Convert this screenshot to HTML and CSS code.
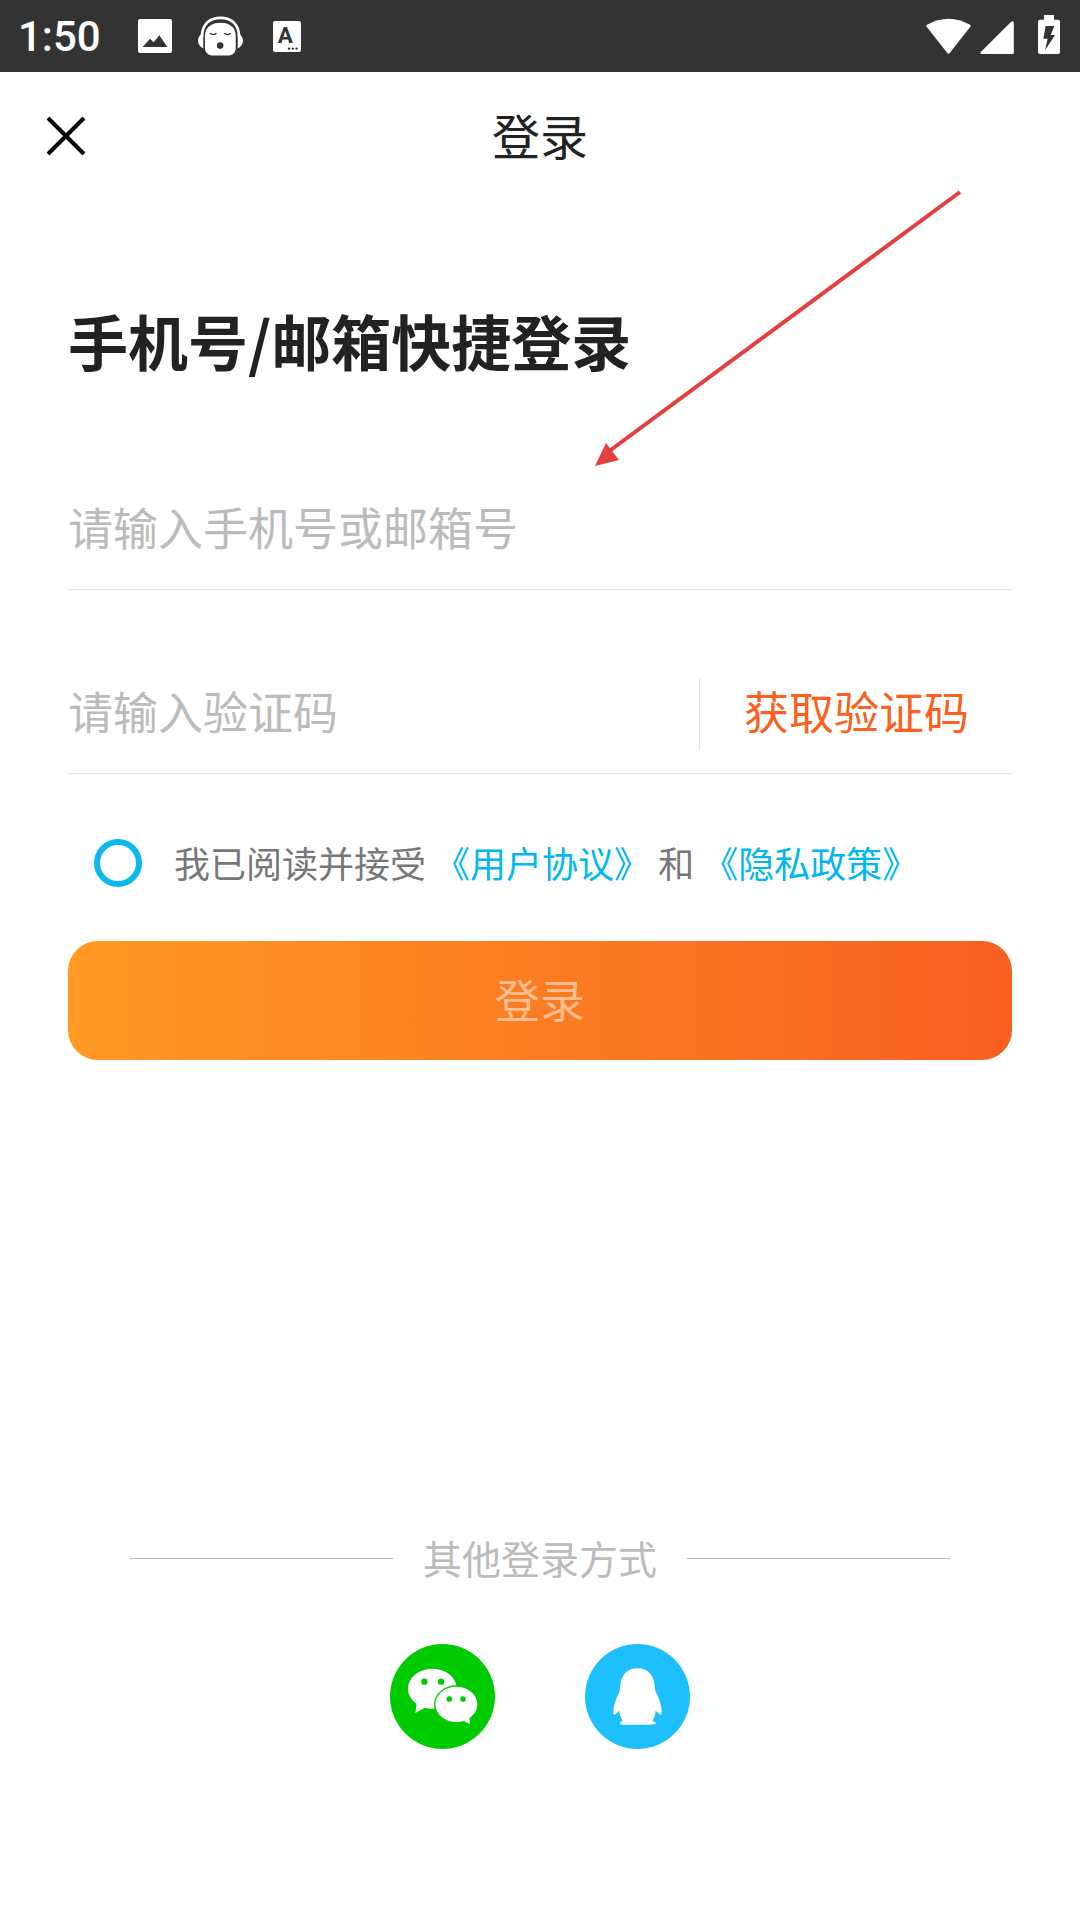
FILE: index.html
```html
<!DOCTYPE html>
<html lang="zh-CN">
<head>
  <meta charset="UTF-8">
  <meta name="viewport" content="width=device-width, initial-scale=1.0">
  <title>登录</title>
  <link rel="stylesheet" href="styles.css">
</head>
<body>
  <div class="status-bar">
    <span class="time">1:50</span>
    <svg class="st-image" viewBox="0 0 102 102"><rect width="102" height="102" rx="6" fill="#fff"/><path d="M14 84 L36 59 L47 70 L64 49 L88 84Z" fill="#333"/></svg>
    <svg class="st-face" viewBox="0 0 136 120">
      <path d="M12 62 C12 24 36 5 68 5 C100 5 124 24 124 62" fill="none" stroke="#fff" stroke-width="8"/>
      <path d="M16 50 L16 98 C6 92 0 84 0 74 C0 64 6 56 16 50Z M120 50 L120 98 C130 92 136 84 136 74 C136 64 130 56 120 50Z" fill="#fff"/>
      <path d="M21 60 C21 34 40 20 68 20 C96 20 114 34 114 60 L114 96 C114 110 104 119 90 119 L46 119 C32 119 21 110 21 96Z" fill="#fff"/>
      <path d="M36 52 Q46 60 56 52 M79 52 Q89 60 99 52" fill="none" stroke="#333" stroke-width="4"/>
      <circle cx="67" cy="89" r="10" fill="#333"/>
    </svg>
    <svg class="st-a" viewBox="0 0 82 91"><rect width="82" height="91" rx="6" fill="#fff"/><text x="36" y="66" font-family="Roboto, sans-serif" font-size="66" font-weight="700" text-anchor="middle" fill="#333">A</text><circle cx="47" cy="81" r="3.5" fill="#333"/><circle cx="58" cy="81" r="3.5" fill="#333"/><circle cx="69" cy="81" r="3.5" fill="#333"/></svg>
    <svg class="st-wifi" viewBox="0 0 134 110"><path d="M3 20 Q67 -16 131 20 Q134 23 132 26 L70 105 Q67 108 64 105 L2 26 Q0 23 3 20Z" fill="#fff"/></svg>
    <svg class="st-signal" viewBox="0 0 102 100"><path d="M2 94 L94 2 Q102 -2 102 6 L102 96 Q102 100 98 100 L5 100 Q-2 100 2 94Z" fill="#fff"/></svg>
    <svg class="st-battery" viewBox="0 0 66 117"><path d="M18 0 H48 V14 H60 Q66 14 66 20 V111 Q66 117 60 117 H6 Q0 117 0 111 V20 Q0 14 6 14 H18Z" fill="#fff"/><path d="M23 33 H49 L38 60 H51 L21 106 L29 71 H16Z" fill="#333"/></svg>
  </div>

  <div class="header">
    <svg class="close" viewBox="0 0 40 40"><path d="M2 2 L38 38 M38 2 L2 38" stroke="#000" stroke-width="4" fill="none"/></svg>
    <div class="header-title">登录</div>
  </div>

  <div class="login">
    <h1>手机号/邮箱快捷登录</h1>

    <div class="field field-phone">
      <span class="placeholder">请输入手机号或邮箱号</span>
    </div>

    <div class="field field-code">
      <span class="placeholder">请输入验证码</span>
      <span class="get-code">获取验证码</span>
    </div>

    <div class="agree">
      <span class="radio"></span>
      <span class="agree-text">我已阅读并接受 <a>《用户协议》</a> 和 <a>《隐私政策》</a></span>
    </div>

    <div class="login-btn">登录</div>

    <div class="other">
      <span class="other-line"></span>
      <span class="other-text">其他登录方式</span>
      <span class="other-line"></span>
    </div>

    <div class="socials">
      <svg class="social" viewBox="0 0 315 315">
        <circle cx="157.5" cy="157.5" r="157.5" fill="#00cb00"/>
        <path d="M76 207 L80 178 L110 188Z" fill="#fff"/>
        <ellipse cx="127" cy="134" rx="73" ry="60" fill="#fff"/>
        <circle cx="103" cy="113" r="9.5" fill="#00cb00"/>
        <circle cx="153" cy="113" r="9.5" fill="#00cb00"/>
        <ellipse cx="199" cy="181" rx="67" ry="57" fill="#00cb00"/>
        <path d="M240 241 L238 220 L213 226Z" fill="#fff"/>
        <ellipse cx="199" cy="181" rx="63" ry="53" fill="#fff"/>
        <circle cx="178" cy="165" r="8.5" fill="#00cb00"/>
        <circle cx="219" cy="165" r="8.5" fill="#00cb00"/>
      </svg>
      <svg class="social" viewBox="0 0 315 315">
        <circle cx="157.5" cy="157.5" r="157.5" fill="#1dc0fd"/>
        <path d="M157 73 C125 73 108 95 106 125 C105 135 104 140 103 145 C95 160 85 185 85 205 C85 212 88 214 91 211 L103 200 C104 212 106 220 113 230 C107 233 104 236 105 239 C106 242 115 242 125 242 L190 242 C205 242 214 241 213 238 C212 236 208 233 202 230 C209 220 211 212 212 200 L224 211 C227 214 230 212 230 205 C230 185 222 160 212 145 C211 140 210 135 209 125 C207 95 189 73 157 73Z" fill="#fff"/>
      </svg>
    </div>
  </div>

  <svg class="arrow" viewBox="0 0 1080 1920">
    <path d="M960 192 L608 452" stroke="#e53e3e" stroke-width="4" fill="none"/>
    <path d="M595 466 L606 443 L619 460Z" fill="#e53e3e"/>
  </svg>
</body>
</html>
```

FILE: styles.css
```css
body {
  margin: 0;
  width: 1080px;
  height: 1920px;
  overflow: hidden;
  background: #fff;
  font-family: "Noto Sans CJK SC", "Noto Sans", sans-serif;
  position: relative;
}

.status-bar {
  height: 72px;
  background: #333;
  display: flex;
  align-items: center;
  padding-right: 20px;
}

.time {
  width: 138px;
  padding-left: 18px;
  box-sizing: border-box;
  color: #fff;
  font-family: Roboto, sans-serif;
  font-size: 42px;
  font-weight: 500;
}

.st-image {
  width: 34px;
  height: 34px;
}

.st-face {
  width: 45px;
  height: 40px;
  margin-left: 26px;
}

.st-a {
  width: 28px;
  height: 31px;
  margin-left: 30px;
}

.st-wifi {
  width: 45px;
  height: 37px;
  margin-left: auto;
}

.st-signal {
  width: 34px;
  height: 33px;
  margin-left: 9px;
  margin-top: 2px;
}

.st-battery {
  width: 22px;
  height: 39px;
  margin-left: 24px;
  margin-top: -3px;
}

.header {
  height: 130px;
  display: flex;
  align-items: center;
  justify-content: center;
  position: relative;
}

.close {
  position: absolute;
  left: 46px;
  top: 44px;
  width: 40px;
  height: 40px;
}

.header-title {
  font-size: 48px;
  line-height: 60px;
  padding-bottom: 6px;
  color: #222;
}

.login {
  padding: 0 68px;
}

h1 {
  margin: 98px 0 0;
  font-size: 60px;
  line-height: 80px;
  font-weight: 700;
  color: #222;
}

.field {
  height: 120px;
  box-sizing: border-box;
  border-bottom: 1px solid #e4e4e4;
  display: flex;
  align-items: center;
}

.field-phone {
  margin-top: 90px;
}

.field-code {
  margin-top: 64px;
}

.placeholder {
  font-size: 45px;
  line-height: 60px;
  padding-bottom: 6px;
  color: #bbb;
  flex: 1;
}

.get-code {
  width: 313px;
  height: 72px;
  line-height: 66px;
  box-sizing: border-box;
  padding-left: 44px;
  border-left: 1px solid #e4e4e4;
  font-size: 45px;
  color: #fb6020;
}

.agree {
  height: 60px;
  margin-top: 59px;
  padding-left: 26px;
  display: flex;
  align-items: center;
}

.radio {
  width: 48px;
  height: 48px;
  box-sizing: border-box;
  border: 6px solid #0cb9ee;
  border-radius: 50%;
  margin-right: 32px;
}

.agree-text {
  font-size: 36px;
  line-height: 50px;
  padding-bottom: 2px;
  color: #777;
}

.agree-text a {
  color: #00b7ee;
}

.login-btn {
  height: 119px;
  margin-top: 48px;
  padding-bottom: 5px;
  box-sizing: border-box;
  border-radius: 30px;
  background: linear-gradient(to right, #ff9a24, #f75f20);
  color: rgba(255, 255, 255, 0.5);
  font-size: 45px;
  display: flex;
  align-items: center;
  justify-content: center;
}

.other {
  height: 60px;
  margin-top: 468px;
  padding: 0 62px;
  display: flex;
  align-items: center;
  justify-content: space-between;
}

.other-line {
  width: 263px;
  height: 1px;
  background: #bbb;
}

.other-text {
  font-size: 39px;
  line-height: 54px;
  padding-bottom: 3px;
  color: #bbb;
}

.socials {
  margin-top: 56px;
  display: flex;
  justify-content: center;
  gap: 90px;
}

.social {
  width: 105px;
  height: 105px;
}

.arrow {
  position: absolute;
  left: 0;
  top: 0;
  width: 1080px;
  height: 1920px;
  pointer-events: none;
}
```
